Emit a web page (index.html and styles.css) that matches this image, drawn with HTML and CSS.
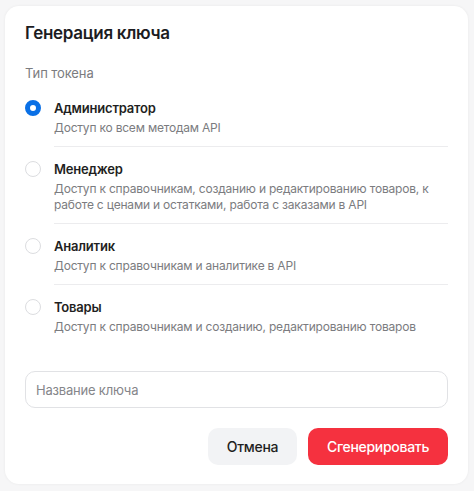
FILE: index.html
```html
<!DOCTYPE html>
<html lang="ru">
<head>
<meta charset="utf-8">
<link rel="stylesheet" href="styles.css">
</head>
<body>
<div class="card">
  <h1 class="title">Генерация ключа</h1>
  <div class="section-label">Тип токена</div>
  <div class="options">
    <label class="option">
      <span class="radio checked"></span>
      <span class="option-body">
        <span class="option-title">Администратор</span>
        <span class="option-desc">Доступ ко всем методам API</span>
      </span>
    </label>
    <label class="option">
      <span class="radio"></span>
      <span class="option-body">
        <span class="option-title">Менеджер</span>
        <span class="option-desc">Доступ к справочникам, созданию и редактированию товаров, к работе с ценами и остатками, работа с заказами в API</span>
      </span>
    </label>
    <label class="option">
      <span class="radio"></span>
      <span class="option-body">
        <span class="option-title">Аналитик</span>
        <span class="option-desc">Доступ к справочникам и аналитике в API</span>
      </span>
    </label>
    <label class="option last">
      <span class="radio"></span>
      <span class="option-body">
        <span class="option-title">Товары</span>
        <span class="option-desc">Доступ к справочникам и созданию, редактированию товаров</span>
      </span>
    </label>
  </div>
  <div class="input">Название ключа</div>
  <div class="actions">
    <button class="btn btn-secondary">Отмена</button>
    <button class="btn btn-primary">Сгенерировать</button>
  </div>
</div>
</body>
</html>
```
FILE: styles.css
```css
* { box-sizing: border-box; }
html, body { margin: 0; padding: 0; }
body {
  background: #f6f6f7;
  font-family: Inter, "Noto Sans", sans-serif;
  color: #1f1f22;
  width: 474px;
  height: 491px;
  padding: 6px 6px 7px 5px;
}
.card {
  background: #fff;
  border-radius: 14px;
  box-shadow: 0 0 3px rgba(0,0,0,0.06);
  height: 478px;
  padding: 15px 20px 0 20px;
}
.title {
  margin: 0;
  font-size: 17px;
  line-height: 24px;
  font-weight: 600;
  letter-spacing: -0.3px;
  color: #1c1c1f;
}
.section-label {
  margin-top: 18px;
  font-size: 13px;
  line-height: 20px;
  letter-spacing: -0.1px;
  color: #7b7c80;
}
.options {
  margin-top: 15px;
  display: flex;
  flex-direction: column;
}
.option {
  display: flex;
  gap: 13px;
}
.radio {
  flex: none;
  width: 16px;
  height: 16px;
  border-radius: 50%;
  border: 1px solid #dcdde0;
  margin-top: 2px;
}
.radio.checked {
  border: 5px solid #0a70e6;
  background: #fff;
}
.option-body {
  flex: 1;
  display: flex;
  flex-direction: column;
  padding-bottom: 10px;
  border-bottom: 1px solid #ececee;
  margin-bottom: 12px;
}
.option.last .option-body {
  border-bottom: none;
}
.option-title {
  font-size: 13px;
  line-height: 20px;
  font-weight: 600;
  letter-spacing: -0.2px;
  color: #1f1f22;
  margin-bottom: 2px;
}
.option-desc {
  font-size: 12px;
  line-height: 16px;
  letter-spacing: -0.2px;
  color: #7b7c80;
}
.input {
  margin-top: 14px;
  height: 37px;
  border: 1px solid #e1e2e5;
  border-radius: 10px;
  padding: 0 10px;
  display: flex;
  align-items: center;
  font-size: 13px;
  letter-spacing: -0.2px;
  color: #85868a;
}
.actions {
  margin-top: 20px;
  display: flex;
  justify-content: flex-end;
  gap: 11px;
}
.btn {
  border: none;
  height: 37px;
  border-radius: 10px;
  font-family: inherit;
  font-size: 14px;
  font-weight: 500;
  letter-spacing: -0.3px;
  padding: 0;
}
.btn-secondary {
  width: 89px;
  background: #f2f3f5;
  color: #1f1f22;
}
.btn-primary {
  width: 140px;
  background: #f5313f;
  color: #fff;
}
```
